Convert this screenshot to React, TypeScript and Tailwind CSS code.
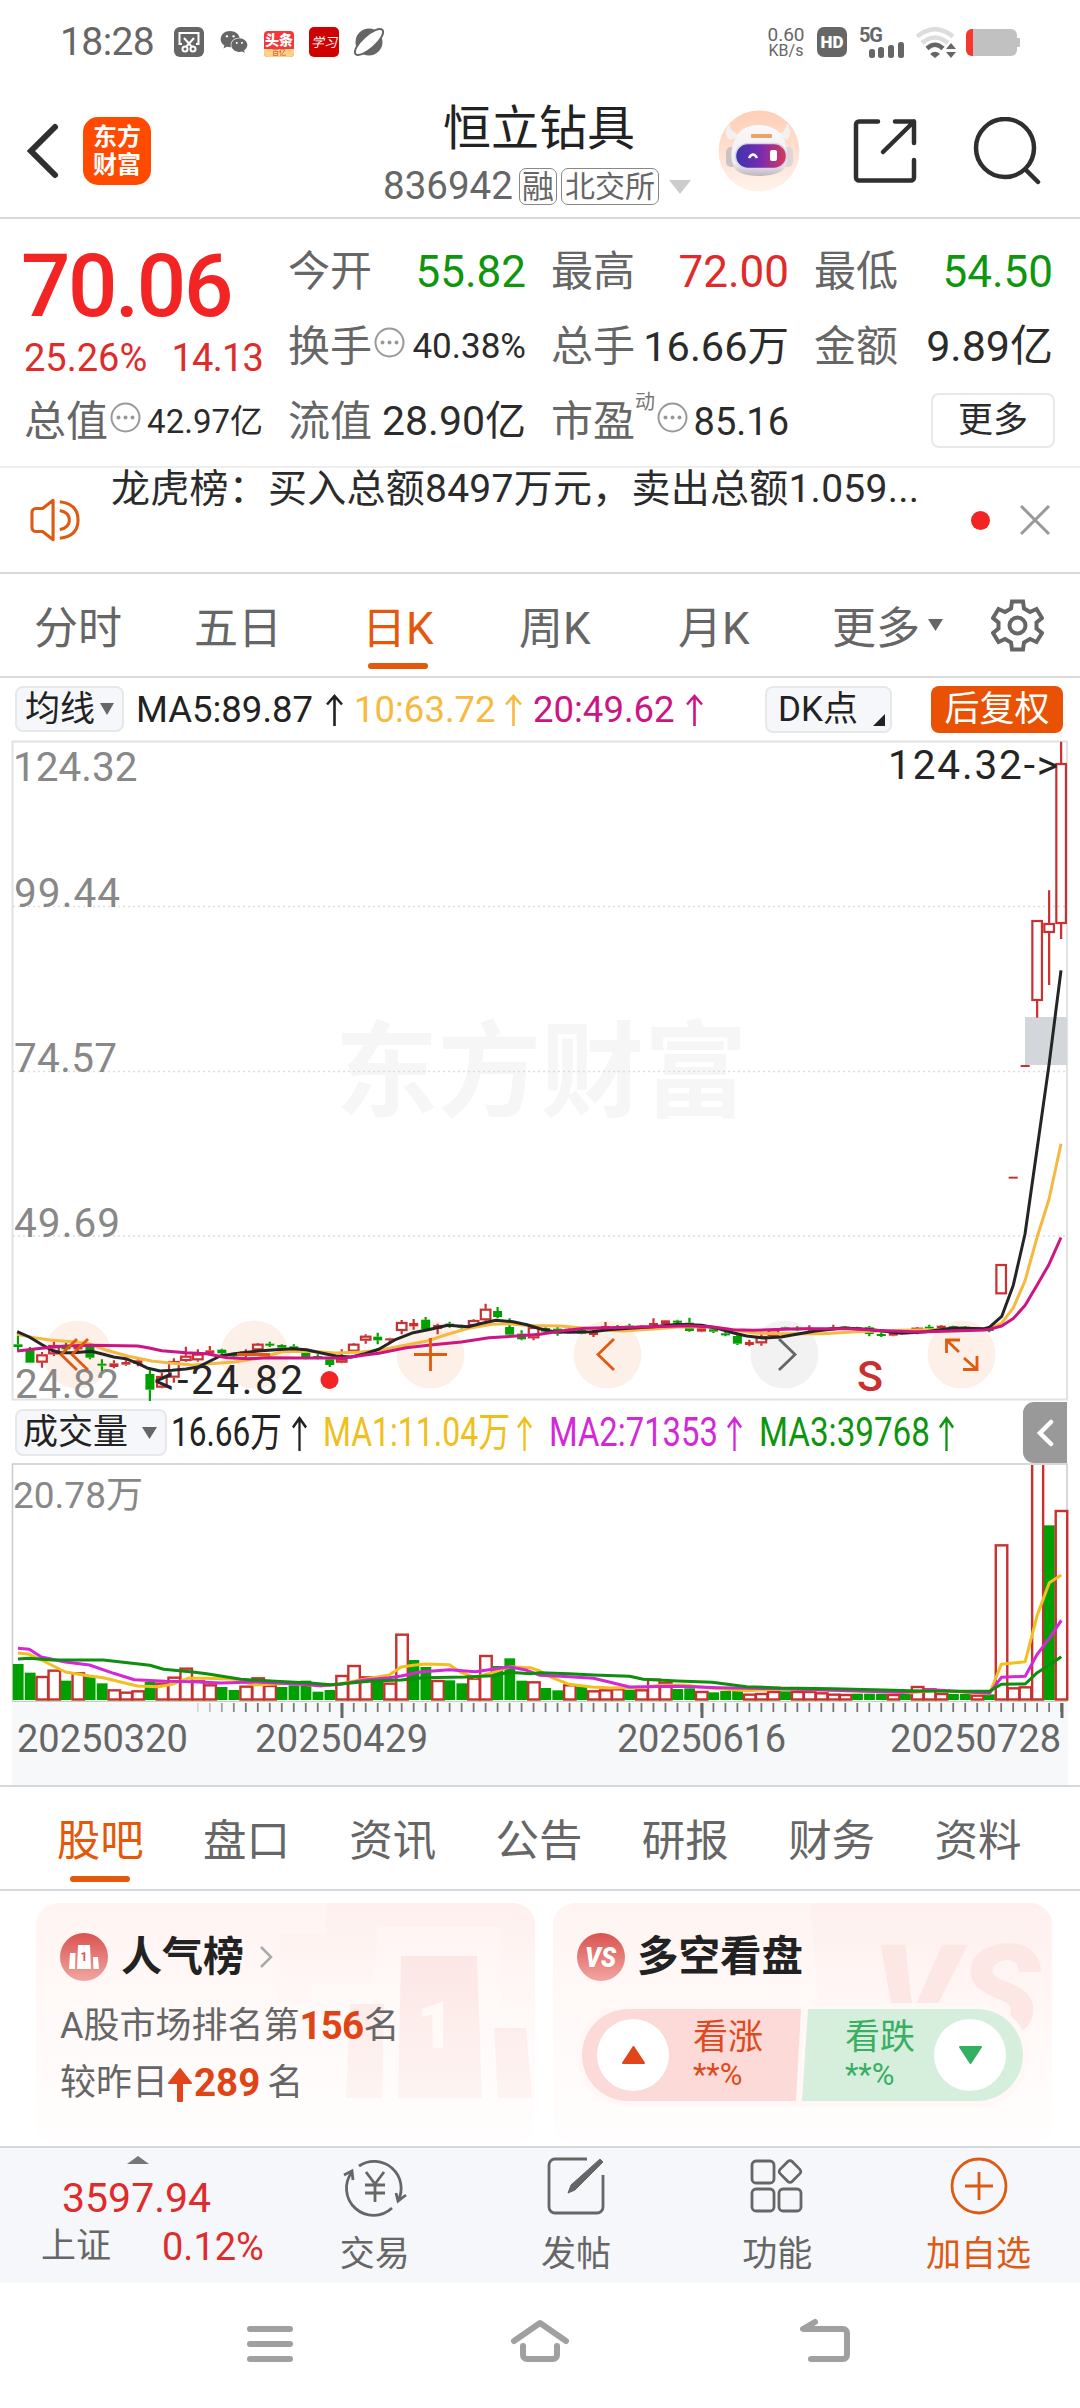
import clsx from "clsx";
import { FaWeixin } from "react-icons/fa";

type Candle = [dir: "r" | "g", top: number, bottom: number, high: number, low: number];

const BAR_STEP = 11.99;
const FIRST_BAR = 18;
const barX = (index: number) => FIRST_BAR + index * BAR_STEP;

// candle rows are thirds of a pixel below PRICE_ORIGIN
const PRICE_ORIGIN = 1280;
const SUB_Y = 3;
const SUB_X = 2.904;

const RED = "#c9302f";
const GREEN = "#00a000";

const candles: Candle[] = [
  ["g", 190, 198, 155, 208], ["g", 205, 245, 198, 245], ["r", 220, 245, 213, 260], ["r", 192, 220, 178, 225],
  ["g", 195, 205, 185, 212], ["r", 195, 205, 190, 210], ["g", 198, 230, 190, 235], ["g", 248, 254, 235, 270],
  ["r", 247, 258, 238, 262], ["r", 243, 251, 238, 254], ["r", 238, 249, 234, 256], ["g", 279, 326, 268, 360],
  ["r", 285, 320, 275, 322], ["r", 240, 290, 232, 305], ["r", 224, 240, 197, 242], ["r", 218, 238, 205, 242],
  ["r", 208, 218, 195, 222], ["g", 206, 217, 203, 222], ["g", 220, 226, 218, 228], ["r", 212, 225, 205, 235],
  ["r", 188, 208, 186, 210], ["g", 188, 193, 182, 198], ["g", 192, 200, 190, 202], ["g", 196, 204, 190, 210],
  ["g", 213, 228, 210, 235], ["g", 225, 229, 220, 235], ["g", 235, 252, 232, 258], ["r", 232, 245, 205, 247],
  ["r", 188, 212, 186, 214], ["r", 164, 179, 160, 188], ["g", 167, 178, 155, 190], ["r", 172, 178, 170, 186],
  ["r", 123, 150, 117, 160], ["r", 126, 136, 114, 146], ["g", 116, 145, 108, 150], ["r", 132, 144, 128, 160],
  ["g", 128, 135, 122, 140], ["g", 134, 140, 131, 143], ["r", 117, 135, 115, 137], ["r", 83, 118, 68, 122],
  ["g", 90, 108, 78, 112], ["g", 138, 161, 112, 163], ["g", 158, 175, 148, 178], ["r", 138, 172, 134, 178],
  ["g", 141, 152, 139, 154], ["g", 143, 158, 138, 164], ["r", 143, 150, 141, 152], ["g", 147, 158, 145, 160],
  ["r", 150, 162, 146, 168], ["r", 135, 142, 123, 150], ["g", 136, 142, 132, 146], ["g", 134, 140, 128, 144],
  ["r", 134, 140, 132, 142], ["r", 126, 132, 112, 135], ["r", 118, 130, 117, 132], ["g", 119, 123, 116, 130],
  ["g", 125, 150, 110, 152], ["r", 140, 152, 138, 154], ["g", 145, 152, 143, 156], ["g", 157, 162, 152, 166],
  ["g", 165, 188, 160, 192], ["r", 183, 192, 176, 196], ["r", 165, 187, 160, 194], ["r", 145, 165, 143, 168],
  ["g", 139, 145, 137, 147], ["g", 142, 148, 136, 150], ["r", 140, 146, 133, 150], ["g", 142, 147, 140, 149],
  ["r", 138, 144, 131, 148], ["g", 137, 142, 135, 144], ["g", 139, 144, 137, 146], ["g", 139, 159, 135, 166],
  ["g", 159, 164, 154, 168], ["r", 155, 164, 153, 166], ["g", 150, 155, 148, 157], ["r", 140, 156, 138, 160],
  ["g", 137, 141, 131, 145], ["r", 134, 142, 132, 144], ["g", 136, 142, 134, 144], ["g", 137, 142, 135, 144],
  ["r", 140, 146, 138, 148], ["g", 143, 150, 141, 154], ["r", -51, 40, -51, 40], ["r", -313, -307, -313, -307],
  ["r", -648, -642, -648, -642], ["r", -1083, -840, -1083, -790], ["r", -1074, -1044, -1172, -888],
  ["r", -1554, -1071, -1618, -1026],
];

const volumes: [dir: "r" | "g", top: number][] = [
  ["g", 1149], ["g", 1175], ["r", 1185], ["r", 1166], ["g", 1199], ["r", 1174], ["g", 1187], ["g", 1207],
  ["r", 1225], ["r", 1232], ["r", 1228], ["g", 1203], ["r", 1205], ["r", 1187], ["r", 1160], ["r", 1198],
  ["r", 1210], ["g", 1218], ["g", 1227], ["r", 1214], ["r", 1189], ["r", 1212], ["g", 1218], ["g", 1213],
  ["g", 1199], ["g", 1232], ["g", 1227], ["r", 1182], ["r", 1152], ["r", 1186], ["g", 1190], ["r", 1205],
  ["r", 1058], ["g", 1137], ["g", 1158], ["r", 1197], ["g", 1198], ["g", 1207], ["r", 1190], ["r", 1122],
  ["g", 1155], ["g", 1132], ["g", 1199], ["r", 1201], ["g", 1221], ["g", 1228], ["r", 1210], ["g", 1217],
  ["r", 1228], ["r", 1225], ["r", 1222], ["g", 1226], ["r", 1225], ["r", 1193], ["r", 1203], ["g", 1224],
  ["g", 1222], ["r", 1230], ["g", 1234], ["g", 1230], ["g", 1229], ["r", 1238], ["r", 1236], ["r", 1230],
  ["g", 1231], ["r", 1230], ["r", 1230], ["r", 1234], ["r", 1238], ["r", 1239], ["g", 1238], ["g", 1238],
  ["g", 1238], ["r", 1239], ["g", 1239], ["r", 1215], ["r", 1222], ["r", 1236], ["g", 1239], ["g", 1239],
  ["r", 1241], ["g", 1240], ["r", 790], ["r", 1219], ["r", 1216], ["r", 545], ["g", 733], ["r", 687],
];

// each line is stored as a left half, a right half and an optional tail in page pixels
const priceLines = [
  {
    color: "#f5b840",
    left: "50,160 100,170 150,178 220,183 265,190 310,208 370,225 440,240 500,247 560,252 600,249 680,243 750,232 820,212 900,211 975,216 1050,213 1100,208 1180,192 1240,180 1300,160 1360,142 1430,130 1480,128 1540,134",
    right: "0,134 60,135 130,142 200,148 240,150 320,145 400,138 500,137 560,146 620,156 700,158 820,158 920,152 1050,148 1200,145 1290,143",
    tail: "989.3,1327.6 1001.7,1322 1013.3,1306.8 1025,1279.9 1037,1236.5 1049,1198.3 1061,1142.8",
  },
  {
    color: "#252525",
    left: "50,152 85,168 120,190 150,208 175,215 215,215 265,211 300,220 330,228 365,233 400,247 430,262 465,270 500,268 540,264 575,258 610,240 640,225 680,218 750,210 800,206 850,203 890,206 930,215 975,225 1020,228 1060,218 1100,205 1150,175 1200,155 1250,145 1300,133 1360,137 1400,127 1440,118 1490,122 1530,131",
    right: "0,143 40,152 85,154 150,152 200,146 260,142 330,137 400,130 470,133 520,143 560,155 600,165 650,171 700,168 745,160 800,150 880,141 950,145 1050,157 1120,152 1200,141 1290,143",
    tail: "989.3,1326.3 1001.7,1315.4 1013.3,1284.2 1025,1233 1037,1148.5 1049,1063.9 1061,969.4",
  },
  {
    color: "#cc1483",
    left: "50,210 120,202 190,195 260,193 400,195 430,200 470,209 540,215 600,218 660,230 720,233 780,230 860,231 1000,231 1060,222 1100,217 1180,200 1250,192 1340,183 1420,170 1500,165 1550,161",
    right: "0,160 60,150 130,142 200,140 330,137 430,134 500,138 560,146 620,148 750,143 900,143 1000,149 1100,153 1200,150 1290,147",
    tail: "989.3,1328.4 1001.7,1325 1013.3,1317.6 1025,1304.6 1037,1284.2 1049,1263.4 1061,1236.5",
  },
];

const volumeLines = [
  {
    color: "#f2bf1f",
    left: "52,1116 85,1120 120,1137 190,1173 260,1185 300,1190 350,1203 400,1215 460,1217 500,1210 545,1192 600,1192 680,1195 740,1212 850,1207 930,1215 980,1210 1050,1196 1130,1182 1165,1158 1200,1153 1235,1149 1305,1151 1340,1175 1380,1189 1430,1175 1480,1157 1540,1160",
    right: "0,1170 35,1190 85,1210 150,1218 210,1221 300,1219 350,1213 420,1212 500,1222 600,1229 700,1224 850,1228 1000,1232 1080,1235 1150,1228 1250,1235 1305,1238 1340,1150 1409,1142 1444,1003 1479,905 1514,882",
    tail: "",
  },
  {
    color: "#d428d8",
    left: "52,1102 85,1105 120,1128 190,1143 260,1152 330,1177 390,1196 480,1201 560,1202 640,1206 740,1203 880,1210 930,1214 990,1210 1060,1197 1130,1190 1165,1185 1220,1173 1305,1166 1380,1172 1440,1163 1480,1157 1530,1168",
    right: "0,1183 85,1187 155,1192 210,1205 260,1218 400,1216 520,1220 700,1223 900,1229 1050,1234 1150,1227 1305,1237 1340,1189 1409,1186 1444,1120 1479,1072 1514,1018",
    tail: "",
  },
  {
    color: "#0d8f0d",
    left: "52,1134 85,1132 150,1137 300,1137 435,1153 475,1165 560,1173 600,1178 700,1195 800,1201 900,1206 960,1211 1010,1207 1080,1200 1165,1197 1230,1190 1350,1188 1430,1184 1480,1174 1540,1178",
    right: "0,1175 85,1178 155,1182 260,1186 300,1195 400,1200 500,1204 600,1217 700,1221 850,1223 1000,1227 1100,1230 1305,1231 1340,1210 1409,1209 1444,1175 1479,1152 1514,1127",
    tail: "",
  },
];

const toPage = (points: string, originX: number) =>
  points
    .split(" ")
    .map((point) => {
      const [x, y] = point.split(",").map(Number);
      return `${(originX + x / SUB_X).toFixed(1)},${(PRICE_ORIGIN + y / SUB_Y).toFixed(1)}`;
    })
    .join(" ");

function ChartLine({ color, left, right, tail }: (typeof priceLines)[number]) {
  return (
    <polyline
      points={`${toPage(left, 0)} ${toPage(right, 540)} ${tail}`}
      fill="none"
      stroke={color}
      strokeWidth="3"
      strokeLinejoin="round"
    />
  );
}

function Caret({ className }: { className?: string }) {
  return (
    <svg className={className} viewBox="0 0 14 12" preserveAspectRatio="none" fill="currentColor">
      <path d="M0 0h14L7 12z" />
    </svg>
  );
}

function UpArrow({ className }: { className?: string }) {
  return (
    <svg className={clsx("shrink-0", className)} viewBox="0 0 17 32" preserveAspectRatio="none" fill="none" stroke="currentColor" strokeWidth="2.6">
      <path d="M8.5 32V2M1 10.5l7.5-8.500 7.500 8.500" />
    </svg>
  );
}

function InfoDot() {
  return (
    <svg className="size-[31px] shrink-0" viewBox="0 0 31 31" fill="none">
      <circle cx="15.500" cy="15.500" r="14" stroke="#999" strokeWidth="2" />
      <g fill="#999">
        <circle cx="8.500" cy="15.500" r="2" />
        <circle cx="15.500" cy="15.500" r="2" />
        <circle cx="22.500" cy="15.500" r="2" />
      </g>
    </svg>
  );
}

function StatusBar() {
  return (
    <div className="flex h-[84px] shrink-0 items-center pl-[60px] pr-[60px] text-[#666]">
      <span className="w-[114px] text-[39px] leading-none tracking-[-0.6px]">18:28</span>
      <svg className="size-[30px]" viewBox="0 0 30 30" fill="none" stroke="#fff" strokeWidth="2">
        <rect width="30" height="30" rx="6" fill="#666" stroke="none" />
        <path d="M8 17H5.500V6h19v11H22M10 11l8 9M20 11l-8 9" />
        <circle cx="11" cy="22" r="2.500" />
        <circle cx="19" cy="22" r="2.500" />
      </svg>
      <FaWeixin className="ml-4 size-[28px]" />
      <div className="ml-4 mt-1 h-[26px] w-[30px] overflow-hidden rounded-[4px] bg-[#f5363c] text-center text-white">
        <div className="text-[14px] font-black leading-[18px]">头条</div>
        <div className="h-[8px] bg-[#ffd28a] text-[7px] leading-[8px] text-[#c84a1c]">百亿</div>
      </div>
      <div className="ml-[15px] flex size-[30px] items-center justify-center rounded-[5px] bg-[#cf0000] text-[13px] italic leading-none text-white">
        学习
      </div>
      <svg className="ml-[15px] size-[30px]" viewBox="0 0 30 30">
        <circle cx="15" cy="15" r="13.500" fill="#666" />
        <ellipse cx="15" cy="15" rx="18" ry="6.500" transform="rotate(-42 15 15)" fill="#fff" stroke="#666" strokeWidth="2" />
      </svg>
      <div className="ml-auto w-[38px] text-center leading-none">
        <div className="text-[19px] leading-[16px]">0.60</div>
        <div className="text-[16px] leading-[15px]">KB/s</div>
      </div>
      <div className="ml-[12px] flex size-[30px] items-center justify-center rounded-[7px] bg-[#666] text-[17px] font-black leading-none text-white">
        HD
      </div>
      <svg className="ml-[12px] h-[31px] w-[46px] overflow-visible" viewBox="0 0 46 31" fill="#666">
        <text x="0" y="15" fontSize="20" fontWeight="700" textLength="24">5G</text>
        <rect x="10" y="22" width="6" height="9" rx="2.500" />
        <rect x="19" y="20" width="6" height="11" rx="2.500" />
        <rect x="29" y="18" width="6" height="13" rx="2.500" />
        <rect x="39" y="15" width="6" height="16" rx="2.500" />
      </svg>
      <svg className="ml-[11px] h-[31px] w-[40px]" viewBox="0 0 40 31" fill="none" strokeWidth="4.500">
        <path d="M1 9.500Q19 -5 37 9.500" stroke="#ddd" />
        <path d="M6 16Q19 5 32 16" stroke="#ddd" />
        <path d="M11 21.500Q19 14 27 21.500" stroke="#666" />
        <path d="M14 27q5-4.500 10 0l-5 4z" fill="#666" />
        <path d="M30 22l5-6 5 6zM30 25h10l-5 6z" fill="#666" />
      </svg>
      <svg className="ml-[10px] h-[27px] w-[54px]" viewBox="0 0 54 27">
        <rect width="51" height="27" rx="6" fill="#c1c1c1" />
        <rect x="50" y="9" width="4" height="9" rx="1" fill="#c1c1c1" />
        <path d="M7 0H6a6 6 0 0 0-6 6v15a6 6 0 0 0 6 6h1z" fill="#f5372d" />
      </svg>
    </div>
  );
}

function Robot() {
  return (
    <svg className="size-[82px]" viewBox="0 0 82 82">
      <defs>
        <linearGradient id="halo" x1="0" y1="0" x2="0" y2="1">
          <stop offset="0" stopColor="#ffceb5" />
          <stop offset="1" stopColor="#fff3ec" />
        </linearGradient>
        <linearGradient id="shell" x1="0" y1="0" x2="0" y2="1">
          <stop offset="0" stopColor="#fbf9fa" />
          <stop offset=".75" stopColor="#efecef" />
          <stop offset="1" stopColor="#bdb6bf" />
        </linearGradient>
        <linearGradient id="visor">
          <stop offset="0" stopColor="#3a35b0" />
          <stop offset=".5" stopColor="#7a2bb0" />
          <stop offset="1" stopColor="#d83a5c" />
        </linearGradient>
      </defs>
      <circle cx="41" cy="41" r="40.500" fill="url(#halo)" />
      <path d="M11 14q-7 9 1 16l11-4q-11-4-12-12zM69 13q7 9 0 17l-10-5q9-3 10-12z" fill="#f4f0f0" />
      <rect x="8" y="37" width="12" height="20" rx="5" fill="#c9c3c8" />
      <rect x="64" y="37" width="11" height="20" rx="5" fill="#dcd6da" />
      <path d="M40 15c12 0 24 5 27 17 3 11 3 18 0 25-2 5-12 9-26 9s-23-4-25-9c-3-7-4-14 0-25 4-12 13-17 24-17z" fill="url(#shell)" />
      <rect x="17.500" y="33.500" width="51" height="25" rx="12.500" fill="url(#visor)" stroke="#d9d3e3" strokeWidth="1.500" />
      <rect x="33" y="24" width="21" height="4" rx="1" fill="#e8a566" />
      <path d="M31 48q4-7 8 0" fill="none" stroke="#fff" strokeWidth="2.500" />
      <rect x="52" y="40" width="7" height="11" rx="2" fill="#fff" />
    </svg>
  );
}

function Header() {
  return (
    <header className="flex h-[135px] shrink-0 items-center border-b-2 border-[#d9d9d9] pl-[26px] pr-[39px] text-[#2f2f2f]">
      <svg className="h-[58px] w-[34px]" viewBox="0 0 34 58" fill="none" stroke="currentColor" strokeWidth="6" strokeLinecap="round">
        <path d="M29 5L5 29l24 24" />
      </svg>
      <div className="ml-[23px] flex size-[68px] flex-col items-center justify-center rounded-[15px] bg-[#ff4a00] text-[24px] font-bold leading-[28px] text-white">
        <span>东方</span>
        <span>财富</span>
      </div>
      <div className="ml-[227px] mt-[9px] flex w-[320px] flex-col">
        <h1 className="ml-[65px] text-[48px] leading-[50px] text-[#222]">恒立钻具</h1>
        <div className="mt-[13px] flex items-center text-[#666]">
          <span className="ml-[5px] w-[136px] text-[38.500px] leading-none">836942</span>
          <span className="flex h-[37px] w-[38px] items-center justify-center rounded-[7px] border border-[#888] text-[32px] leading-none">融</span>
          <span className="ml-1 flex h-[37px] w-[98px] items-center justify-center rounded-[7px] border border-[#888] text-[30px] leading-none">北交所</span>
          <Caret className="ml-[10px] h-[14px] w-[22px] text-[#ccc]" />
        </div>
      </div>
      <div className="ml-auto flex items-center">
        <Robot />
        <svg className="ml-[53px] size-[66px]" viewBox="0 0 66 66" fill="none" stroke="currentColor" strokeWidth="4.500" strokeLinecap="round" strokeLinejoin="round">
          <path d="M25 3.500H6A3 3 0 0 0 3 6.500v53a3 3 0 0 0 3 3h52a3 3 0 0 0 3-3V42M42 3.500h19V25M61 3.500L30 34" />
        </svg>
        <svg className="ml-[54px] size-[68px]" viewBox="0 0 68 68" fill="none" stroke="currentColor" strokeWidth="4.500" strokeLinecap="round">
          <circle cx="32" cy="31" r="29" />
          <path d="M53 53l12 12" />
        </svg>
      </div>
    </header>
  );
}

const LABEL = "-ml-0.5 text-[42px] leading-none text-[#666]";

function Stat({ label, value, tone, info, note, className }: {
  label: string;
  value: string;
  tone?: string;
  info?: boolean;
  note?: string;
  className: string;
}) {
  return (
    <div className="flex h-[75px] items-center">
      <span className={LABEL}>{label}</span>
      {note ? <span className="-mt-10 text-[20px] leading-none text-[#777]">{note}</span> : null}
      {info ? <span className="-mt-[9px] ml-0.5"><InfoDot /></span> : null}
      <span className={clsx("ml-auto leading-none", tone ?? "text-[#2b2b2b]", className)}>{value}</span>
    </div>
  );
}

function Quote() {
  return (
    <section className="grid h-[249px] shrink-0 grid-cols-[237px_236px_236px_237px] content-start gap-x-[27px] border-b-2 border-[#eee] pl-[26px] pt-[15px]">
      <div className="row-span-2 flex h-[150px] flex-col text-[#e02b2b]">
        <div className="-ml-[5px] mt-2 text-[87px] font-medium leading-[88px] tracking-[-2.400px] text-[#f32424]">70.06</div>
        <div className="-ml-0.5 mt-[9px] flex justify-between text-[38px] leading-none">
          <span>25.26%</span>
          <span className="tracking-[-0.800px]">14.13</span>
        </div>
      </div>
      <Stat label="今开" value="55.82" tone="text-[#0f960f]" className="text-[44px]" />
      <Stat label="最高" value="72.00" tone="text-[#e02b2b]" className="text-[44px]" />
      <Stat label="最低" value="54.50" tone="text-[#0f960f]" className="text-[44px]" />
      <Stat label="换手" value="40.38%" info className="text-[35px]" />
      <Stat label="总手" value="16.66万" className="text-[41.500px]" />
      <Stat label="金额" value="9.89亿" className="text-[43px]" />
      <Stat label="总值" value="42.97亿" info className="text-[33px]" />
      <Stat label="流值" value="28.90亿" className="text-[41px]" />
      <Stat label="市盈" value="85.16" note="动" info className="text-[38px]" />
      <div className="flex h-[75px] items-center justify-end">
        <button className="mr-[-2px] -mt-[3px] h-[55px] w-[124px] rounded-lg border-2 border-[#e8e8e8] text-[35px] leading-none text-[#2b2b2b]">更多</button>
      </div>
    </section>
  );
}

function NewsTicker() {
  return (
    <section className="flex h-[106px] shrink-0 border-b-2 border-[#d9d9d9] pl-[29px]">
      <svg className="mt-[28px] h-[48px] w-[52px]" viewBox="0 0 54 50" fill="none" stroke="#dd5a13" strokeWidth="3.200" strokeLinejoin="round">
        <path d="M25 4.500v41L14 37H7a4 4 0 0 1-4-4V17a4 4 0 0 1 4-4h7z" />
        <path d="M32 15q10 2 10 10t-10 10M32 6q19 2 19 19T32 44" />
      </svg>
      <p className="ml-[30px] w-[820px] whitespace-nowrap text-[39px] leading-[42px] tracking-[0.250px] text-[#2b2b2b]">
        龙虎榜：买入总额8497万元，卖出总额1.059...
      </p>
      <span className="ml-10 mt-[43px] size-[19px] rounded-full bg-[#f32424]" />
      <svg className="ml-[30px] mt-[37px] size-[30px]" viewBox="0 0 30 30" stroke="#999" strokeWidth="3">
        <path d="M1 1l28 28M29 1L1 29" />
      </svg>
    </section>
  );
}

const periods = [
  { label: "分时", className: "w-[160px]" },
  { label: "五日", className: "w-[168px]" },
  { label: "日K", className: "w-[157px]" },
  { label: "周K", className: "w-[159px]" },
  { label: "月K", className: "w-[154px]" },
];

function PeriodTabs() {
  return (
    <nav className="flex h-[104px] shrink-0 border-b-2 border-[#d9dadc] pl-[34px] pt-[33px] text-[44px] leading-[44px] text-[#666]">
      {periods.map(({ label, className }) => (
        <div key={label} className={clsx(className, label === "日K" && "text-[#e4580c]")}>
          {label}
          {label === "日K" ? <div className="ml-[6px] mt-3 h-[6px] w-[60px] rounded-full bg-[#e4580c]" /> : null}
        </div>
      ))}
      <span>更多</span>
      <Caret className="ml-2 mt-[12px] h-[12px] w-[15px]" />
      <svg className="-mt-2 ml-[48px] size-[53px]" viewBox="0 0 53 53" fill="none" stroke="currentColor" strokeWidth="4">
        <path d="M21 2.500h11l1 7 6 3.500 6.500-3 5.500 9-5.500 4.500v6L51 34l-5.500 9-6.500-3-6 3.500-1 7H21l-1-7-6-3.500-6.500 3L2 34l5.500-4.500v-6L2 19l5.500-9 6.500 3 6-3.500z" />
        <circle cx="26.500" cy="26.500" r="8" />
      </svg>
    </nav>
  );
}

const CHIP = "flex items-center rounded-lg border-2 border-[#e6e8ea] bg-[#f6f7fa] text-[35px] leading-none text-[#222]";

function AverageBar() {
  return (
    <div className="flex h-[62px] shrink-0 items-start pl-[15px] pt-[8px] text-[36.500px] leading-[47px]">
      <div className={clsx(CHIP, "h-[46px] w-[109px] pl-2")}>
        均线
        <Caret className="ml-[5px] h-[12px] w-[14px] text-[#666]" />
      </div>
      <div className="ml-[12px] flex w-[218px] items-center text-[#222]">
        <span className="w-[190px]">MA5:89.87</span>
        <UpArrow className="h-[32px] w-[17px]" />
      </div>
      <div className="flex w-[179px] items-center text-[#f7b93f]">
        <span className="w-[151px]">10:63.72</span>
        <UpArrow className="h-[32px] w-[17px]" />
      </div>
      <div className="flex w-[232px] items-center text-[#cc1483]">
        <span className="w-[153px]">20:49.62</span>
        <UpArrow className="h-[32px] w-[17px]" />
      </div>
      <div className={clsx(CHIP, "relative h-[47px] w-[127px] pl-[11px]")}>
        DK点
        <svg className="absolute bottom-[5px] right-[5px] size-[12px]" viewBox="0 0 12 12" fill="#222">
          <path d="M12 0v12H0z" />
        </svg>
      </div>
      <div className="ml-[39px] flex h-[47px] w-[132px] items-center justify-center rounded-lg bg-[#e95205] text-[35px] leading-none text-white">
        后复权
      </div>
    </div>
  );
}

function PriceChart() {
  return (
    <svg className="block h-[661px] w-full shrink-0 overflow-visible" viewBox="0 739 1080 661">
      <text x="335" y="1108" fontSize="104" fontWeight="700" textLength="412" lengthAdjust="spacingAndGlyphs" fill="#f6f6f6">东方财富</text>
      <g stroke="#ddd" strokeWidth="1.500" strokeDasharray="2 3">
        <path d="M13 905.500H1067M13 1070.500H1067M13 1235H1067" />
      </g>
      <rect x="12.500" y="740.500" width="1054.500" height="658" fill="none" stroke="#e2e2e2" strokeWidth="2" />

      <g fillOpacity=".9">
        {[77.5, 254.5, 430.5, 607.5, 784.5, 961.5].map((cx) => (
          <circle key={cx} cx={cx} cy="1353.500" r="34" fill={cx === 784.5 ? "#f1f1f1" : "#fdeee6"} />
        ))}
      </g>
      <g fill="#888" fontSize="40.500">
        <text x="13" y="780">124.32</text>
        <text x="14" y="906" textLength="106">99.44</text>
        <text x="14" y="1071" textLength="103">74.57</text>
        <text x="14" y="1236" textLength="106">49.69</text>
        <text x="15" y="1397" textLength="104">24.82</text>
      </g>
      <rect x="1025" y="1016" width="42" height="48" fill="#d3d7dc" />

      {candles.map(([dir, top, bottom, high, low], index) => {
        const x = barX(index);
        const color = dir === "r" ? RED : GREEN;
        const y1 = PRICE_ORIGIN + top / SUB_Y;
        const y2 = PRICE_ORIGIN + bottom / SUB_Y;
        const hollow = dir === "r" && y2 - y1 > 4;
        return (
          <g key={index} stroke={color} strokeWidth="2.200">
            <path d={`M${x} ${PRICE_ORIGIN + high / SUB_Y}V${y1}M${x} ${y2}V${PRICE_ORIGIN + low / SUB_Y}`} />
            {hollow ? (
              <rect x={x - 4.8} y={y1 + 1} width="9.600" height={y2 - y1 - 2} fill="none" />
            ) : (
              <rect x={x - 4.5} y={y1} width="9" height={Math.max(2, y2 - y1)} fill={color} stroke="none" />
            )}
          </g>
        );
      })}
      {priceLines.map((line) => (
        <ChartLine key={line.color} {...line} />
      ))}

      <g fill="none" stroke="#e05a10" strokeWidth="2.800">
        <path d="M77 1338L61 1353.500L77 1369M88 1338L72 1353.500L88 1369" />
        <path d="M237 1353.500H270M414 1353.500H447M430.500 1337V1370" />
        <path d="M614 1338L598 1353.500L614 1369" />
        <path d="M779 1338L795 1353.500L779 1369" stroke="#666" />
        <path d="M946.500 1352V1339H960M946.500 1339L959 1351M977 1355V1368.500H963M977 1368.500L964 1357" />
      </g>
      <g fill="#252525" fontSize="40.500">
        <text x="888" y="778" textLength="170">124.32-&gt;</text>
        <text x="154" y="1393" textLength="149">&lt;-24.82</text>
      </g>
      <circle cx="329.500" cy="1379" r="9" fill="#f32424" />
      <text x="857" y="1390" fontSize="43" fontWeight="500" fill={RED}>S</text>
    </svg>
  );
}

const volumeAverages = [
  { label: "16.66万", color: "text-[#222]", box: "w-[152px]", text: "w-[121px]", scale: "scale-x-[0.79]" },
  { label: "MA1:11.04万", color: "text-[#efc01c]", box: "w-[226px]", text: "w-[194px]", scale: "scale-x-[0.8]" },
  { label: "MA2:71353", color: "text-[#d428d8]", box: "w-[210px]", text: "w-[178px]", scale: "scale-x-[0.82]" },
  { label: "MA3:39768", color: "text-[#0d960d]", box: "w-[230px]", text: "w-[180px]", scale: "scale-x-[0.83]" },
];

function VolumeBar() {
  return (
    <div className="flex h-[62px] shrink-0 items-start pl-[15px] pr-[13px] pt-[1px]">
      <div className={clsx(CHIP, "mt-[7px] h-[47px] w-[152px] pl-1.5")}>
        成交量
        <Caret className="ml-[14px] h-[12px] w-[15px] text-[#666]" />
      </div>
      <div className="ml-[4px] mt-[9px] flex text-[40px] leading-[44px]">
        {volumeAverages.map(({ label, color, box, text, scale }) => (
          <div key={label} className={clsx("flex items-center", color, box)}>
            <span className={text}>
              <span className={clsx("inline-block origin-left whitespace-nowrap", scale)}>{label}</span>
            </span>
            <UpArrow className="h-[35px] w-[15px]" />
          </div>
        ))}
      </div>
      <div className="ml-auto flex h-[61px] w-[44px] items-center justify-center rounded-l-[11px] bg-[#999]">
        <svg className="h-[30px] w-[18px]" viewBox="0 0 18 30" fill="none" stroke="#fff" strokeWidth="4.500" strokeLinecap="round">
          <path d="M15 4L4 15l11 11" />
        </svg>
      </div>
    </div>
  );
}

function VolumeChart() {
  return (
    <svg className="block h-[322px] w-full shrink-0" viewBox="0 1462 1080 322">
      <rect x="12" y="1700" width="1056" height="84" fill="#f7f8fa" />
      <path d="M12.500 1700V1463H1067V1700" fill="none" stroke="#ccc" strokeWidth="1.500" />
      <path d="M12 1700.500H1067" stroke="#b5dab5" />
      <text x="13" y="1507" fontSize="37" fill="#888">20.78万</text>
      {volumes.map(([dir, top], index) => {
        const x = barX(index);
        const y = PRICE_ORIGIN + top / SUB_Y;
        // the tallest bar runs off the top of the plot
        const clipped = y < 1463;
        if (dir === "g") {
          return <rect key={index} x={x - 5.2} y={y} width="10.800" height={1699 - y} fill={GREEN} />;
        }
        return clipped ? (
          <path key={index} d={`M${x - 5} 1464V1698.500H${x + 6}V1464`} fill="none" stroke={RED} strokeWidth="2.400" />
        ) : (
          <rect key={index} x={x - 5.4} y={y + 1} width="11.500" height={1697.5 - y} fill="#fff" stroke={RED} strokeWidth="2.400" />
        );
      })}
      {volumeLines.map((line) => (
        <ChartLine key={line.color} {...line} />
      ))}
      {Array.from({ length: 73 }, (_, index) => (
        <path
          key={index}
          d={`M${barX(index + 15)} 1702V1711`}
          stroke="#777"
          strokeWidth="1.800"
          opacity={Math.min(1, 0.25 + index * 0.2)}
        />
      ))}
      <path d="M342 1702V1717M702 1702V1717M1062 1702V1717" stroke="#666" strokeWidth="3" />
      <g fill="#666" fontSize="38">
        <text x="17" y="1751">20250320</text>
        <text x="255" y="1751" textLength="173">20250429</text>
        <text x="617" y="1751" textLength="169">20250616</text>
        <text x="890" y="1751" textLength="171">20250728</text>
      </g>
    </svg>
  );
}

const sections = ["股吧", "盘口", "资讯", "公告", "研报", "财务", "资料"];

function SectionTabs() {
  return (
    <nav className="flex h-[106px] shrink-0 border-y-2 border-[#d5d8db] pl-[27px] pt-[33px]">
      {sections.map((label, index) => (
        <div key={label} className={clsx("flex w-[146.300px] flex-col items-center text-[43.500px] leading-[44px]", index === 0 ? "text-[#e4580c]" : "text-[#666]")}>
          {label}
          {index === 0 ? <div className="mt-[12px] h-[6px] w-[60px] rounded-full bg-[#e4580c]" /> : null}
        </div>
      ))}
    </nav>
  );
}

const CARD = "relative h-[241px] w-[499px] overflow-hidden rounded-[22px] bg-gradient-to-b from-[#fff4f2] via-[#fffaf9] to-[#fffdfd] pl-[24px]";

function PopularityCard() {
  return (
    <div className={CARD}>
      <svg className="absolute right-0 top-0 h-[241px] w-[260px]" viewBox="0 0 260 241">
        <defs>
          <linearGradient id="podium" x1="0" y1="0" x2="0" y2="1">
            <stop offset="0" stopColor="#fce7e5" />
            <stop offset="1" stopColor="#fdf4f2" />
          </linearGradient>
          <linearGradient id="outline" x1="0" y1="0" x2="0" y2="1">
            <stop offset="0" stopColor="#fef0ee" />
            <stop offset="1" stopColor="#fffaf9" />
          </linearGradient>
        </defs>
        <path d="M52 0H260V130H228L225 24H103L98 81H38L35 100H3L5 31H50z" fill="url(#outline)" />
        <path d="M126 53H202L207 195H123zM75 101H109L107 195H71zM219 125H251L257 195H223z" fill="url(#podium)" />
        <text x="142" y="145" fontSize="64" fontWeight="900" fill="#fffaf8">1</text>
      </svg>
      <div className="relative flex items-center pt-[30px]">
        <svg className="size-[48px]" viewBox="0 0 48 48">
          <circle cx="24" cy="24" r="24" fill="url(#badge)" />
          <path d="M10 20h5.500L15 36H9zM18 12h12l1 24H17zM33 24h5l1 12h-5.500z" fill="#fff" />
          <text x="20.500" y="28" fontSize="12" fontWeight="700" fill="#d9534f">1</text>
        </svg>
        <h2 className="ml-[13px] text-[41px] font-bold leading-[48px] text-[#222]">人气榜</h2>
        <svg className="ml-[15px] h-[24px] w-[15px]" viewBox="0 0 15 24" fill="none" stroke="#aaa" strokeWidth="2.500">
          <path d="M2 2l10 10L2 22" />
        </svg>
      </div>
      <p className="relative mt-[25px] flex items-center text-[36px] leading-[40px] text-[#666]">
        A股市场排名第<b className="text-[38.500px] tracking-[-0.800px] text-[#df4417]">156</b>名
      </p>
      <p className="relative mt-[17px] flex items-center text-[36px] leading-[40px] text-[#666]">
        较昨日
        <svg className="mt-1 h-[34px] w-[24px]" viewBox="0 0 24 34" fill="#e2451a" stroke="#e2451a" strokeWidth="2" strokeLinejoin="round">
          <path d="M12 1l11 14h-9v18h-4V15H1z" />
        </svg>
        <b className="ml-[2px] text-[38.500px] text-[#df4417]">289</b>
        <span className="ml-[7px]">名</span>
      </p>
    </div>
  );
}

function SentimentCard() {
  return (
    <div className={CARD}>
      <svg className="absolute right-0 top-0 h-[241px] w-[250px]" viewBox="0 0 250 241">
        <path d="M8 0H250V150H20z" fill="url(#outline)" />
        <text x="70" y="134" fontSize="130" fontWeight="900" fontStyle="italic" textLength="168" lengthAdjust="spacingAndGlyphs" fill="#fce7e4">VS</text>
      </svg>
      <div className="relative flex items-center pt-[30px]">
        <svg className="size-[48px]" viewBox="0 0 48 48">
          <circle cx="24" cy="24" r="24" fill="url(#badge)" />
          <text x="8" y="34" fontSize="28" fontWeight="900" fontStyle="italic" textLength="31" lengthAdjust="spacingAndGlyphs" fill="#fff">VS</text>
        </svg>
        <h2 className="ml-[12px] text-[41.500px] font-bold leading-[48px] text-[#222]">多空看盘</h2>
      </div>
      <div className="relative -ml-px mt-[22px] flex h-[104px] w-[453px] items-center justify-between">
        <svg className="absolute inset-0 size-full" viewBox="0 0 453 104">
          <rect width="453" height="104" rx="52" fill="#fff8f6" />
          <path d="M52 6H225L220 98H52A46 46 0 0 1 52 6z" fill="#fcdad7" />
          <path d="M232 6H401A46 46 0 0 1 401 98H226z" fill="#d6efdd" />
        </svg>
        <div className="relative ml-[21px] flex items-center gap-[24px]">
          <span className="flex size-[72px] items-center justify-center rounded-full bg-white">
            <svg className="h-[18px] w-[23px]" viewBox="0 0 23 18" fill="#e2451a" stroke="#e2451a" strokeWidth="2" strokeLinejoin="round">
              <path d="M11.500 1L22 17H1z" />
            </svg>
          </span>
          <span className="flex flex-col text-[#dd4a20]">
            <span className="text-[35px] leading-[40px]">看涨</span>
            <span className="text-[31px] leading-[34px]">**%</span>
          </span>
        </div>
        <div className="relative mr-[23px] flex items-center gap-[19px]">
          <span className="flex flex-col text-[#3aae63]">
            <span className="text-[35px] leading-[40px]">看跌</span>
            <span className="text-[31px] leading-[34px]">**%</span>
          </span>
          <span className="flex size-[72px] items-center justify-center rounded-full bg-white">
            <svg className="h-[18px] w-[23px]" viewBox="0 0 23 18" fill="#34b062" stroke="#34b062" strokeWidth="2" strokeLinejoin="round">
              <path d="M1 1h21L11.500 17z" />
            </svg>
          </span>
        </div>
      </div>
    </div>
  );
}

const actions = [
  {
    label: "交易",
    icon: (
      <>
        <path d="M16 11A27 27 0 0 1 55 46M49 53A27 27 0 0 1 9 17M1 20l8-4 1 9M63 40l-8 6-2-8" />
        <path d="M23 17l9 12 9-12M32 29v18M22 30h20M22 38h20" />
      </>
    ),
  },
  {
    label: "发帖",
    icon: (
      <>
        <path d="M43 4H11a6 6 0 0 0-6 6v42a6 6 0 0 0 6 6h42a6 6 0 0 0 6-6V20" />
        <path d="M24 38l3-8L56 4l3 3-28 28z" fill="currentColor" strokeWidth="1" />
      </>
    ),
  },
  {
    label: "功能",
    icon: (
      <>
        <rect x="7" y="6" width="22" height="22" rx="4" />
        <rect x="7" y="34" width="22" height="22" rx="4" />
        <rect x="34" y="34" width="22" height="22" rx="4" />
        <rect x="36.500" y="8" width="17" height="17" rx="3" transform="rotate(45 45 16.500)" />
      </>
    ),
  },
  {
    label: "加自选",
    icon: (
      <>
        <circle cx="32" cy="31" r="27" />
        <path d="M32 17v28M18 31h28" />
      </>
    ),
  },
];

function ActionBar() {
  return (
    <footer className="flex h-[137px] shrink-0 border-t-2 border-[#d5d8db] bg-[#f6f7fa] text-[#666]">
      <div className="w-[274px] text-[#e02b2b]">
        <svg className="ml-[127px] mt-[8px] h-[8px] w-[22px]" viewBox="0 0 22 8" fill="#777">
          <path d="M0 8L11 0l11 8z" />
        </svg>
        <div className="mt-[12px] pl-[62px] text-[41px] leading-[44px]">3597.94</div>
        <div className="mt-[5px] flex items-center pl-[41px] text-[38px] leading-[44px]">
          <span className="w-[121px] text-[35px] text-[#666]">上证</span>
          0.12%
        </div>
      </div>
      {actions.map(({ label, icon }) => (
        <div key={label} className={clsx("flex w-[201.300px] flex-col items-center pt-[7px]", label === "加自选" && "text-[#dd5a13]")}>
          <svg className="size-[64px]" viewBox="0 0 64 64" fill="none" stroke="currentColor" strokeWidth="2.800">
            {icon}
          </svg>
          <span className="mt-[18px] text-[35px] leading-[36px]">{label}</span>
        </div>
      ))}
    </footer>
  );
}

const navKeys = [
  { d: "M9 12H49M9 27H49M9 42H49", className: "ml-[241px]" },
  { d: "M3 24L29 6l26 18M12 29v9a4 4 0 0 0 4 4h26a4 4 0 0 0 4-4v-9", className: "ml-[212px]" },
  { d: "M20 5L8 12h40a4 4 0 0 1 4 4v22a4 4 0 0 1-4 4H16", className: "ml-[226px]" },
];

function SystemNav() {
  return (
    <div className="flex grow items-start bg-white pt-[34px]">
      {navKeys.map(({ d, className }) => (
        <svg key={d} className={clsx("h-[52px] w-[58px]", className)} viewBox="0 0 58 52" fill="none" stroke="#a0a0a0" strokeWidth="6" strokeLinecap="round" strokeLinejoin="round">
          <path d={d} />
        </svg>
      ))}
    </div>
  );
}

export default function App() {
  return (
    <div className="flex h-[2408px] w-[1080px] flex-col overflow-hidden bg-white font-['Roboto','Noto_Sans_CJK_SC',sans-serif]">
      <StatusBar />
      <Header />
      <Quote />
      <NewsTicker />
      <PeriodTabs />
      <AverageBar />
      <PriceChart />
      <VolumeBar />
      <VolumeChart />
      <SectionTabs />
      <svg className="absolute size-0">
        <linearGradient id="badge" x1="0" y1="0" x2="0" y2="1">
          <stop offset="0" stopColor="#d9534f" />
          <stop offset="1" stopColor="#f2a6a2" />
        </linearGradient>
      </svg>
      <div className="flex h-[255px] shrink-0 gap-[18px] pl-[36px] pt-[12px]">
        <PopularityCard />
        <SentimentCard />
      </div>
      <ActionBar />
      <SystemNav />
    </div>
  );
}
